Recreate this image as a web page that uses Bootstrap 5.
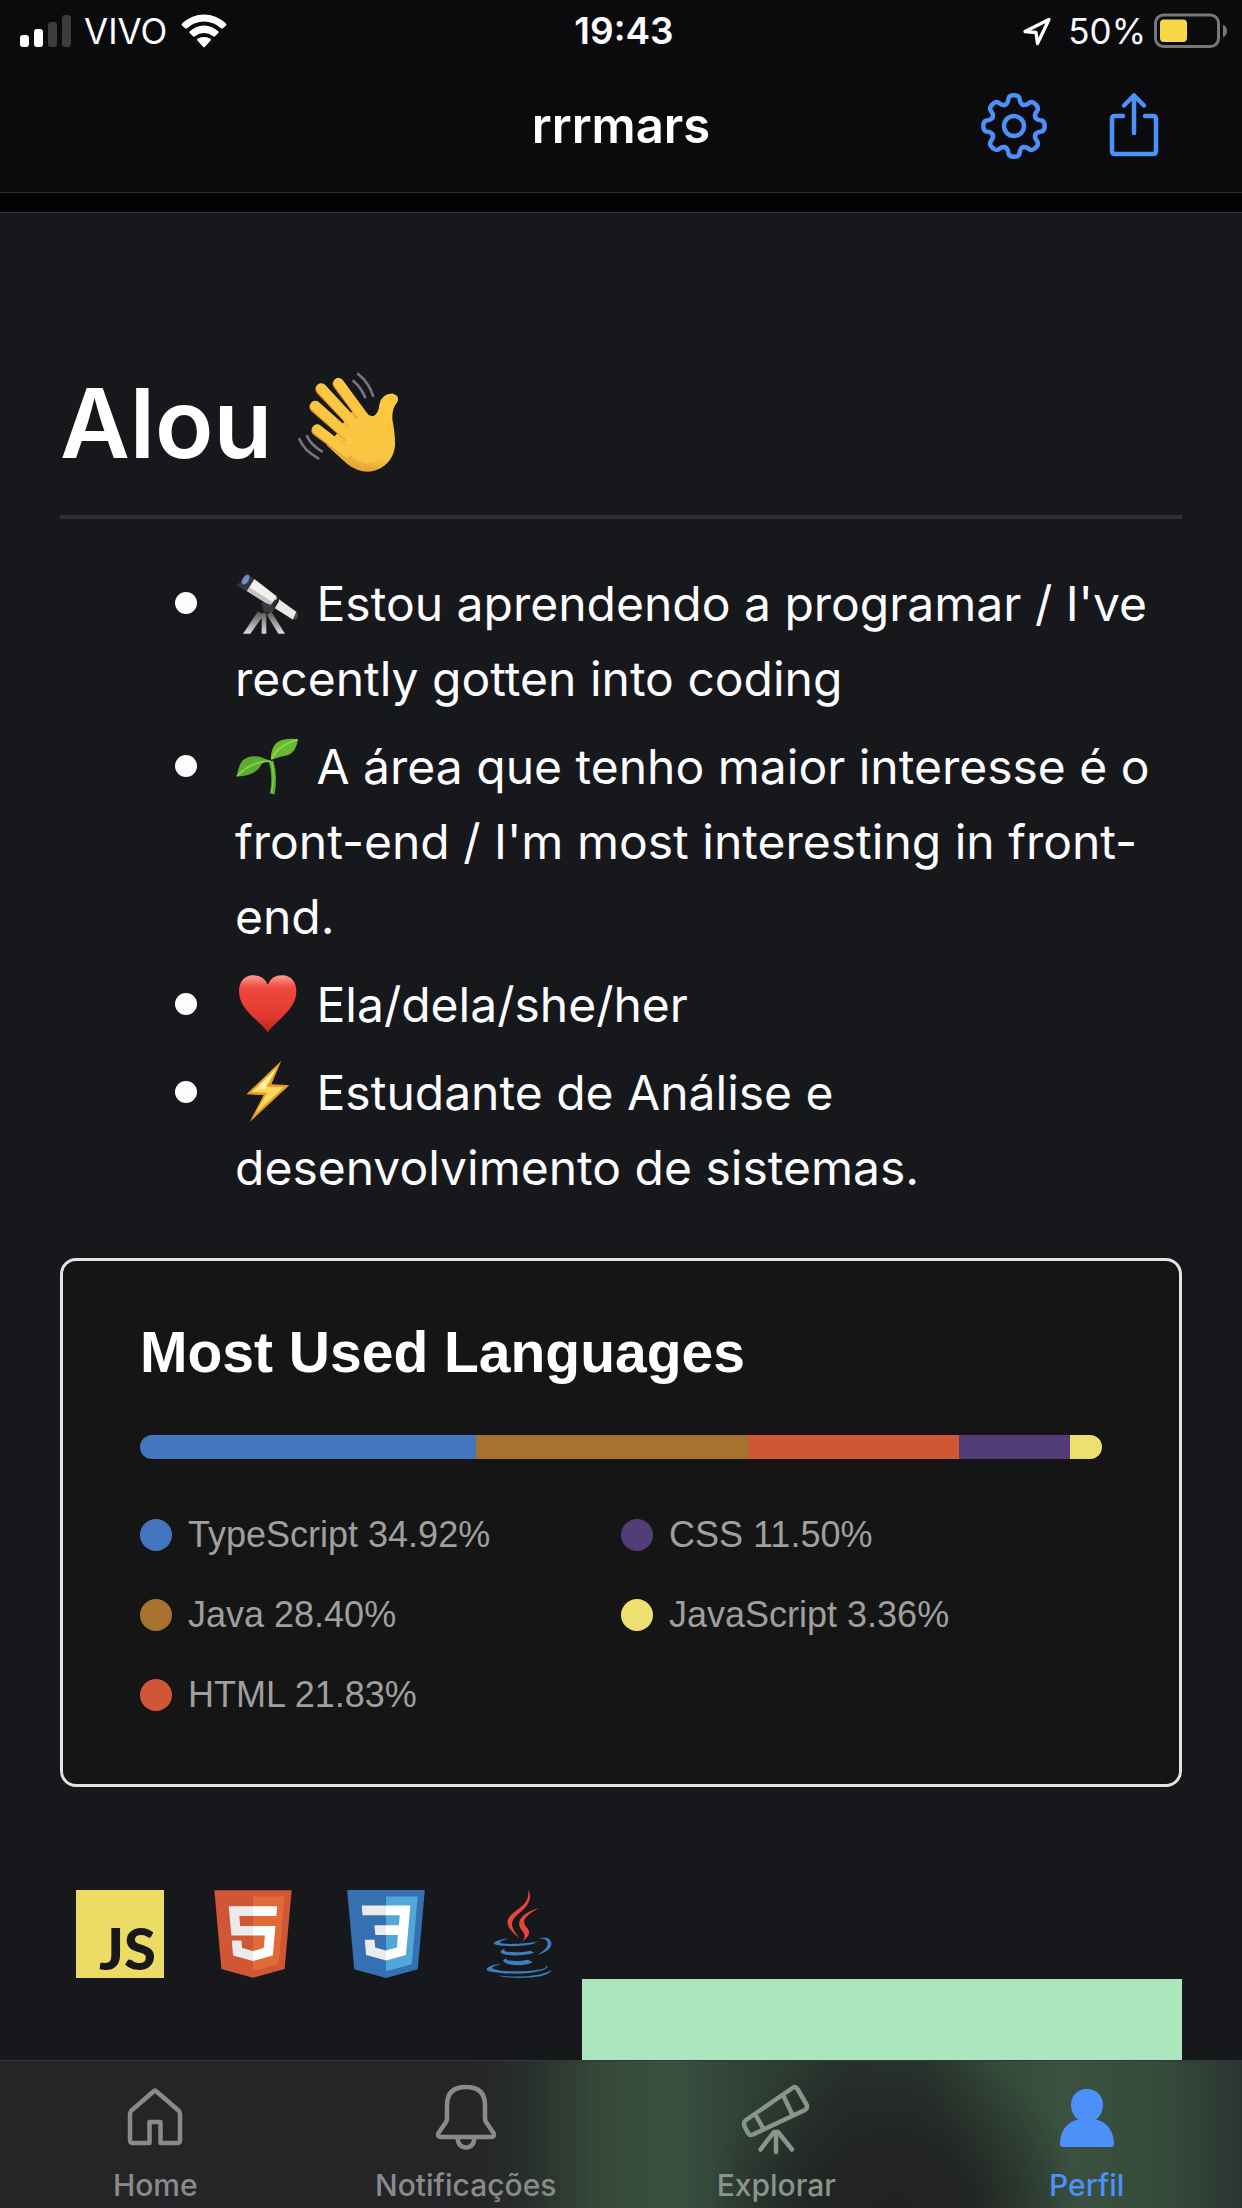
<!DOCTYPE html>
<html lang="pt-BR" data-bs-theme="dark">
<head>
<meta charset="utf-8">
<meta name="viewport" content="width=device-width, initial-scale=1">
<title>rrrmars</title>
<link href="https://cdn.jsdelivr.net/npm/bootstrap@5.3.0/dist/css/bootstrap.min.css" rel="stylesheet">
<style>
  body { background: #17181c; color: #fcfcff; font-family: Inter, "Noto Sans", sans-serif; }
  svg { display: block; flex: none; }
  .top-area { background: #0b0b0d; border-bottom: 1px solid #2c2c2e; }
  .status-bar { height: 62px; padding: 0 14px 0 20px; font-size: 35px; line-height: 62px; }
  .carrier { margin: 0 14px 0 12px; }
  .clock { font-size: 37px; }
  .title-bar { height: 130px; padding: 0 80px 2px; }
  .title-bar h1 { font-size: 49px; line-height: 60px; font-weight: 600; }
  .nav-actions { gap: 58px; }
  .nav-actions .btn { color: #4c90fa; line-height: 1; }
  .band { height: 22px; background: #020202; border-bottom: 1px solid #2f2f32; }
  .profile { overflow-y: auto; scrollbar-width: none; padding: 150px 60px 0; }
  .profile::-webkit-scrollbar { display: none; }
  .profile h2 { font-size: 96px; line-height: 120px; font-weight: 600; gap: 24px; padding-bottom: 32px; border-bottom: 4px solid #2e2f33; }
  .facts { font-size: 48px; line-height: 75px; margin: 47px 0 0; padding-left: 115px; gap: 13px; }
  .facts li { position: relative; padding-left: 60px; }
  .facts li::before { content: ""; position: absolute; left: 0; top: 26px; width: 22px; height: 22px; border-radius: 50%; background: #fcfcff; }
  .facts svg { display: inline-block; width: 64px; height: 64px; vertical-align: -14px; margin-right: 4px; }
  .lang-card { margin-top: 53px; padding: 56px 77px 69px; background: #151515; border: 3px solid #e4e2e2; border-radius: 16px; font-family: "Liberation Sans", Arial, sans-serif; }
  .lang-card h3 { font-size: 57px; line-height: 70px; font-weight: 700; color: #fff; }
  .lang-bar { height: 24px; border-radius: 12px; margin-top: 48px; background: #151515; }
  .legend { margin-top: 56px; font-size: 36px; line-height: 40px; color: #9f9f9f; row-gap: 40px; }
  .legend .dot { width: 32px; height: 32px; border-radius: 50%; margin-right: 16px; }
  .c-ts { background: #4475bf; } .c-java { background: #a7722e; } .c-html { background: #d15635; }
  .c-css { background: #533d77; } .c-js { background: #eee070; }
  .stack { margin-top: 102px; padding-left: 15px; gap: 43px; }
  .mint { width: 600px; max-width: 100%; height: 300px; background: #abe6bc; }
  .tab-bar { height: 148px; border-top: 1px solid #36373a;
    background:
      radial-gradient(ellipse 190px 190px at 72% 110%, #202321 0%, #212422 40%, rgba(33,36,34,0) 100%),
      linear-gradient(90deg, #252527 0%, #252527 38%, #28302b 43%, #344839 48%, #39513f 54%, #304137 60%, #29332d 68%, #2b362f 74%, #344a3a 80%, #3a523f 86%, #344a3a 94%, #2b3430 100%); }
  .tab-bar a { color: #8a8a8d; font-size: 30px; line-height: 36px; font-weight: 500; padding-top: 22px; }
  .tab-bar a.explore { color: #86968b; }
  .tab-bar a.active { color: #4c90fa; }
  .tab-bar svg { margin-bottom: 12px; }
</style>
</head>
<body>
<div class="vh-100 d-flex flex-column overflow-hidden">
  <header class="top-area">
    <div class="status-bar d-flex align-items-center">
      <div class="col d-flex align-items-center">
        <svg width="52" height="34" viewBox="0 0 52 34"><g fill="#fff"><rect y="21" width="9" height="12" rx="3"/><rect x="14" y="15" width="9" height="18" rx="3"/></g><g fill="#3c3c3e"><rect x="28" y="8" width="9" height="25" rx="3"/><rect x="42" y="1" width="9" height="32" rx="3"/></g></svg>
        <span class="carrier">VIVO</span>
        <svg width="46" height="34" viewBox="0 0 46 34" fill="#fff"><path d="M1 9.500Q0 10.500 1 11.500L4 14.300Q5 15 6 14.300Q13.500 7.600 23 7.600T40 14.300Q41 15 42 14.300L45 11.500Q46 10.500 45 9.500Q35 .5 23 .5T1 9.500Z"/><path d="M8.500 17.500Q8 18.300 8.700 19L12 22.200Q13 23 14 22.200Q18 19 23 19T32 22.200Q33 23 34 22.200L37.300 19Q38 18.300 37.500 17.500Q31 11.500 23 11.500T8.500 17.500Z"/><path d="M16 26Q16 24.800 17.200 24.300Q23 21.500 28.800 24.300Q30 24.800 30 26L24 32.800Q23 33.800 22 32.800Z"/></svg>
      </div>
      <span class="clock fw-semibold">19:43</span>
      <div class="col d-flex align-items-center justify-content-end">
        <svg width="30" height="30" viewBox="0 0 30 30" fill="none" stroke="#fff" stroke-width="3.300" stroke-linejoin="round"><path d="M27 3.500L3 15.500L14 16.500L15.500 27.500Z"/></svg>
        <span class="ms-3 me-2">50%</span>
        <svg width="74" height="36" viewBox="0 0 74 36"><rect x="1.500" y="2" width="63" height="31.500" rx="8" fill="none" stroke="#77777a" stroke-width="3"/><rect x="6" y="6.500" width="27" height="22.500" rx="4" fill="#f8d748"/><path d="M69 12Q73 13 73 18T69 24Z" fill="#77777a"/></svg>
      </div>
    </div>
    <div class="title-bar d-flex align-items-center">
      <div class="col"></div>
      <h1 class="m-0">rrrmars</h1>
      <div class="col d-flex justify-content-end nav-actions">
        <button type="button" class="btn border-0 p-0" aria-label="Configurações">
          <svg width="68" height="68" viewBox="-34 -34 68 68" fill="none" stroke="currentColor" stroke-width="4.500" stroke-linecap="round"><defs><path id="cog" d="M-8.800-21.200C-6-22.400-5.900-25-5.500-27.500C-5-30.300-3-30.700 0-30.700S5-30.300 5.500-27.500C5.900-25 6-22.400 8.800-21.200"/></defs><use href="#cog"/><use href="#cog" transform="rotate(45)"/><use href="#cog" transform="rotate(90)"/><use href="#cog" transform="rotate(135)"/><use href="#cog" transform="rotate(180)"/><use href="#cog" transform="rotate(225)"/><use href="#cog" transform="rotate(270)"/><use href="#cog" transform="rotate(315)"/><circle r="10"/></svg>
        </button>
        <button type="button" class="btn border-0 p-0" aria-label="Compartilhar">
          <svg width="56" height="68" viewBox="0 0 56 68" fill="none" stroke="currentColor" stroke-width="4.500" stroke-linecap="round" stroke-linejoin="round"><path d="M17 24H9Q6 24 6 27V59Q6 62 9 62H47Q50 62 50 59V27Q50 24 47 24H39"/><path d="M28 41V3.500M18 13.500L28 3.500L38 13.500"/></svg>
        </button>
      </div>
    </div>
  </header>
  <div class="band"></div>

  <main class="profile flex-grow-1">
    <h2 class="d-flex align-items-center m-0">Alou
      <svg width="103" height="101" viewBox="770 62 310 304" role="img" aria-label="mão acenando"><defs><linearGradient id="skin" gradientUnits="userSpaceOnUse" x1="1000" y1="180" x2="960" y2="365"><stop offset="0" stop-color="#fac93c"/><stop offset=".7" stop-color="#f7c444"/><stop offset="1" stop-color="#e39a34"/></linearGradient></defs>
        <path d="M925 190L952 175L1000 196Q1019 190 1021 160Q1028 127 1060 127Q1083 133 1075 152Q1058 172 1060 205Q1069 250 1068 285Q1060 345 1000 361Q960 367 925 340L862 282L900 240Z" fill="url(#skin)"/>
        <g stroke-linecap="round" stroke-width="34" stroke="#d48c2c"><path d="M833 238L925 305"/><path d="M827 167L940 265"/><path d="M845 114L960 235"/><path d="M897 98L985 215"/></g>
        <g stroke-linecap="round" stroke-width="31" stroke="#fac742"><path d="M834 235L925 305"/><path d="M828 164L940 265"/><path d="M846 111L960 235"/><path d="M898 95L985 215"/></g>
        <ellipse cx="985" cy="265" rx="65" ry="72" fill="#fac742"/>
        <g fill="none" stroke="#75767b" stroke-width="8" stroke-linecap="round"><path d="M957 68Q990 95 1002 134M943 89Q967 110 978 138"/><path d="M780 264Q795 300 837 322M803 255Q815 282 848 301"/></g></svg>
    </h2>
    <ul class="facts list-unstyled d-flex flex-column">
      <li><svg viewBox="256 64 192 192" role="img" aria-label="telescópio"><defs><linearGradient id="leg" x2="0" y2="1"><stop stop-color="#555"/><stop offset="1" stop-color="#ddd"/></linearGradient></defs><path d="M325 185L280 252H302L342 196ZM336 190V252H350V190ZM352 196L386 252H406L364 185Z" fill="url(#leg)"/><path d="M293 70L262 108L292 126L313 88Z" fill="#33373d"/><ellipse cx="288" cy="90" rx="9" ry="16" transform="rotate(35 288 90)" fill="#6f8cc4"/><path d="M314 88L384 142L368 172L292 124Z" fill="#f3f0ed"/><path d="M292 124L368 172L374 161L300 113Z" fill="#c9c3bf"/><path d="M386 147L441 187L430 210L370 172Z" fill="#ebe8e6"/><path d="M430 211L440 186Q450 195 441 208Z" fill="#4a4a4d"/><path d="M336 157L342 188H370L384 160L376 148L364 165Z" fill="#3a3a3c"/><path d="M382 140Q392 156 370 170" stroke="#222" stroke-width="6" fill="none"/></svg> Estou aprendendo a programar / I've recently gotten into coding</li>
      <li><svg viewBox="256 556 192 192" role="img" aria-label="broto"><path d="M364 638Q378 680 368 736" fill="none" stroke="#57a72b" stroke-width="14"/><path d="M366 640Q377 680 366 732" fill="none" stroke="#83cb45" stroke-width="5"/><path d="M366 640Q312 608 278 636Q268 648 261 684Q320 680 334 650Q345 632 366 640Z" fill="#5cad2d"/><path d="M364 634Q362 578 408 572Q425 568 445 572Q440 610 414 620Q382 626 364 634Z" fill="#68b932"/><path d="M364 638Q310 634 262 682" fill="none" stroke="#91d351" stroke-width="5"/><path d="M366 630Q385 590 443 573" fill="none" stroke="#94d353" stroke-width="5"/></svg> A área que tenho maior interesse é o front-end / I'm most interesting in front-end.</li>
      <li><svg viewBox="256 36 192 192" role="img" aria-label="coração"><defs><linearGradient id="heart" x2="0" y2="1"><stop stop-color="#ff9d91"/><stop offset=".22" stop-color="#f0483c"/><stop offset=".7" stop-color="#e23a30"/><stop offset="1" stop-color="#b92720"/></linearGradient></defs><path d="M354 74Q366 46 397 46C428 46 440 70 440 94C440 150 380 180 354 217C328 180 268 150 268 94C268 70 280 46 311 46Q342 46 354 74Z" fill="url(#heart)"/></svg> Ela/dela/she/her</li>
      <li><svg viewBox="256 300 192 192" role="img" aria-label="raio"><path d="M395 302L290 403L342 405L300 486L419 376L365 373Z" fill="#e99b29"/><path d="M384 320L306 396L353 398L318 460L402 382L350 380Z" fill="#fdda5c"/><path d="M378 328L318 388L345 386Z" fill="#fff0a0"/></svg> Estudante de Análise e desenvolvimento de sistemas.</li>
    </ul>

    <section class="lang-card">
      <h3 class="m-0">Most Used Languages</h3>
      <div class="lang-bar d-flex overflow-hidden">
        <div class="c-ts" style="width:34.92%"></div><div class="c-java" style="width:28.4%"></div><div class="c-html" style="width:21.83%"></div><div class="c-css" style="width:11.5%"></div><div class="c-js" style="width:3.36%"></div>
      </div>
      <div class="legend row gx-0">
        <div class="col-6 d-flex align-items-center"><span class="dot c-ts"></span>TypeScript 34.92%</div>
        <div class="col-6 d-flex align-items-center"><span class="dot c-css"></span>CSS 11.50%</div>
        <div class="col-6 d-flex align-items-center"><span class="dot c-java"></span>Java 28.40%</div>
        <div class="col-6 d-flex align-items-center"><span class="dot c-js"></span>JavaScript 3.36%</div>
        <div class="col-6 d-flex align-items-center"><span class="dot c-html"></span>HTML 21.83%</div>
      </div>
    </section>

    <div class="stack d-flex flex-wrap">
      <svg class="overflow-visible" width="90" height="90" viewBox="0 0 90 90" role="img" aria-label="JavaScript"><path fill="#ecdb64" d="M1 1H89V89H1Z"/><text x="24" y="81" font-family="Lato, sans-serif" font-weight="900" font-size="58" fill="#17181c">JS</text></svg>
      <svg width="90" height="90" viewBox="0 0 128 128" role="img" aria-label="HTML5"><path fill="#d15635" d="M19.037 113.876L9.032 1.661h109.936l-10.016 112.198-45.019 12.480z"/><path fill="#df6b38" d="M64 116.800l36.378-10.086 8.559-95.878H64z"/><path fill="#ebebeb" d="M64 52.455H45.788L44.530 38.361H64V24.599H29.489l.33 3.692 3.382 37.927H64zm0 35.743l-.061.017-15.327-4.140-.979-10.975H33.816l1.928 21.609 28.193 7.826.063-.017z"/><path fill="#fff" d="M63.952 52.455v13.763h16.947l-1.597 17.849-15.350 4.143v14.319l28.215-7.820.207-2.325 3.234-36.233.335-3.696h-3.708zm0-27.856v13.762h33.244l.276-3.092.628-6.978.329-3.692z"/></svg>
      <svg width="90" height="90" viewBox="0 0 128 128" role="img" aria-label="CSS3"><path fill="#3570b2" d="M18.814 114.123L8.760 1.352h110.480l-10.064 112.754-45.243 12.543-45.119-12.526z"/><path fill="#53a7d8" d="M64.001 117.062l36.559-10.136 8.601-96.354h-45.160v106.490z"/><path fill="#fff" d="M64.001 51.429h18.302l1.264-14.163H64.001V23.435h34.682l-.332 3.711-3.400 38.114h-30.950V51.429z"/><path fill="#ebebeb" d="M64.083 87.349l-.061.018-15.403-4.159-.985-11.031H33.752l1.937 21.717 28.331 7.863.063-.018v-14.390z"/><path fill="#fff" d="M81.127 64.675l-1.666 18.522-15.426 4.164v14.390l28.354-7.858.208-2.337 2.406-26.881H81.127z"/><path fill="#ebebeb" d="M64.048 23.435v13.831H30.640l-.277-3.108-.63-7.012-.331-3.711h34.646zm-.047 27.996v13.831H48.792l-.277-3.108-.631-7.012-.33-3.711h16.447z"/></svg>
      <svg width="90" height="90" viewBox="0 0 128 128" role="img" aria-label="Java"><g fill="#3a7fc0"><path d="M47.617 98.120s-4.767 2.774 3.397 3.710c9.892 1.130 14.947.968 25.845-1.092 0 0 2.871 1.795 6.873 3.351-24.439 10.470-55.308-.607-36.115-5.969zm-2.988-13.665s-5.348 3.959 2.823 4.805c10.567 1.091 18.910 1.180 33.354-1.600 0 0 1.993 2.025 5.132 3.131-29.542 8.640-62.446.68-41.309-6.336z"/><path d="M102.123 108.229s3.529 2.910-3.888 5.159c-14.102 4.272-58.706 5.560-71.094.171-4.451-1.938 3.899-4.625 6.526-5.192 2.739-.593 4.303-.485 4.303-.485-4.953-3.487-32.013 6.850-13.743 9.815 49.821 8.076 90.817-3.637 77.896-9.468zM49.912 70.294s-22.686 5.389-8.033 7.348c6.188.828 18.518.638 30.011-.326 9.390-.789 18.813-2.474 18.813-2.474s-3.308 1.419-5.704 3.053c-23.042 6.061-67.544 3.238-54.731-2.958 10.832-5.239 19.644-4.643 19.644-4.643zm40.697 22.747c23.421-12.167 12.591-23.860 5.032-22.285-1.848.385-2.677.72-2.677.72s.688-1.079 2-1.543c14.953-5.255 26.451 15.503-4.823 23.725 0-.002.359-.327.468-.617z"/><path d="M52.214 126.021c22.476 1.437 57-.8 57.817-11.436 0 0-1.571 4.032-18.577 7.231-19.186 3.612-42.854 3.191-56.887.874 0 .001 2.875 2.381 17.647 3.331z"/></g><g fill="#e7443a"><path d="M69.802 61.271c6.025 6.935-1.580 13.170-1.580 13.170s15.289-7.891 8.269-17.777c-6.559-9.215-11.587-13.792 15.635-29.580 0 .001-42.731 10.670-22.324 34.187z"/><path d="M76.491 1.587S89.459 14.563 64.188 34.510c-20.266 16.006-4.621 25.130-.007 35.559-11.831-10.673-20.509-20.070-14.688-28.815C58.041 28.420 81.722 22.195 76.491 1.587z"/></g></svg>
    </div>
    <div class="mint ms-auto"></div>
  </main>

  <nav class="tab-bar d-flex flex-shrink-0">
    <a href="#home" class="col d-flex flex-column align-items-center text-decoration-none"><svg width="72" height="72" viewBox="0 0 72 72" fill="none" stroke="currentColor" stroke-width="4.500" stroke-linejoin="round"><path d="M34.500 8.500Q36 7 37.500 8.500L59.500 27.500Q61 29 61 31V57Q61 60 58 60H41.500V39H30.500V60H14Q11 60 11 57V31Q11 29 12.500 27.500Z"/></svg>Home</a>
    <a href="#notificacoes" class="col d-flex flex-column align-items-center text-decoration-none"><svg width="72" height="72" viewBox="0 0 72 72" fill="none" stroke="currentColor" stroke-width="4.500" stroke-linejoin="round"><path d="M17 22Q17 4 36 4T55 22V35Q55 37 56 39L63.500 50Q65 54 61 54H11Q7 54 8.500 50L16 39Q17 37 17 35Z"/><path d="M27.500 54Q28 64.500 36 64.500T44.500 54"/></svg>Notificações</a>
    <a href="#explorar" class="explore col d-flex flex-column align-items-center text-decoration-none"><svg width="72" height="72" viewBox="0 0 72 72" fill="none" stroke="currentColor" stroke-width="4.500" stroke-linejoin="round" stroke-linecap="round"><path d="M52.500 5Q55.500 3 57.500 6L66.500 21.500Q68 25 65 27L13 51.500Q10 53 8 50L4.500 43.500Q3 39.500 6 37Z"/><path d="M43.500 13L52.500 32M16.500 33.500L23.500 46M36 69V49M36 49H38L52 66.500M36 49H34L20.500 66.500"/></svg>Explorar</a>
    <a href="#perfil" class="active col d-flex flex-column align-items-center text-decoration-none" aria-current="page"><svg width="72" height="72" viewBox="0 0 72 72" fill="currentColor"><path d="M36 6C46 6 52 13 52 22Q52 31 45 36.500C56 39 63 48 63 61Q63 64 60 64H12Q9 64 9 61C9 48 16 39 27 36.500Q20 31 20 22C20 13 26 6 36 6Z"/></svg>Perfil</a>
  </nav>
</div>
<script src="https://cdn.jsdelivr.net/npm/bootstrap@5.3.0/dist/js/bootstrap.bundle.min.js"></script>
</body>
</html>
